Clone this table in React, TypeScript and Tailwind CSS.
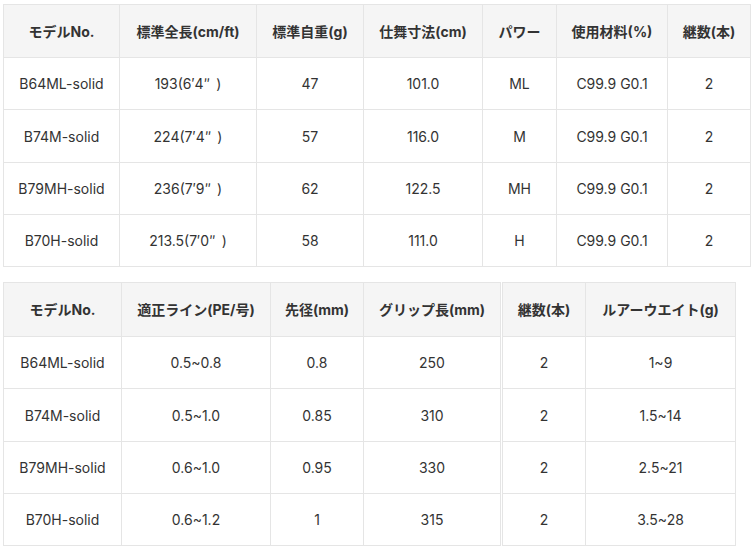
import React from "react";

const Q = () => (
  <span className="mr-[6px] font-['Noto_Sans_CJK_JP',sans-serif]">″</span>
);

const t1Head = ["モデルNo.", "標準全長(cm/ft)", "標準自重(g)", "仕舞寸法(cm)", "パワー", "使用材料(%)", "継数(本)"];
const t1W = ["w-[116px]", "w-[137px]", "w-[107px]", "w-[119px]", "w-[74px]", "w-[111px]", "w-[83px]"];
const t1Rows: React.ReactNode[][] = [
  ["B64ML-solid", <>193(6′4<Q />)</>, "47", "101.0", "ML", "C99.9 G0.1", "2"],
  ["B74M-solid", <>224(7′4<Q />)</>, "57", "116.0", "M", "C99.9 G0.1", "2"],
  ["B79MH-solid", <>236(7′9<Q />)</>, "62", "122.5", "MH", "C99.9 G0.1", "2"],
  ["B70H-solid", <>213.5(7′0<Q />)</>, "58", "111.0", "H", "C99.9 G0.1", "2"],
];

const t2aHead = ["モデルNo.", "適正ライン(PE/号)", "先径(mm)", "グリップ長(mm)"];
const t2aW = ["w-[118px]", "w-[149px]", "w-[93px]", "w-[137px]"];
const t2aRows = [
  ["B64ML-solid", "0.5~0.8", "0.8", "250"],
  ["B74M-solid", "0.5~1.0", "0.85", "310"],
  ["B79MH-solid", "0.6~1.0", "0.95", "330"],
  ["B70H-solid", "0.6~1.2", "1", "315"],
];

const t2bHead = ["継数(本)", "ルアーウエイト(g)"];
const t2bW = ["w-[83px]", "w-[150px]"];
const t2bRows = [
  ["2", "1~9"],
  ["2", "1.5~14"],
  ["2", "2.5~21"],
  ["2", "3.5~28"],
];

const rowHeights = ["h-[52px]", "h-[53px]", "h-[52px]", "h-[52px]"];

function Table({
  head,
  widths,
  rows,
  tableW,
  headH,
}: {
  head: string[];
  widths: string[];
  rows: React.ReactNode[][];
  tableW: string;
  headH: string;
}) {
  return (
    <table className={`table-fixed border-collapse text-[14px] text-[#333333] ${tableW}`}>
      <colgroup>
        {widths.map((w, i) => (
          <col key={i} className={w} />
        ))}
      </colgroup>
      <thead>
        <tr className={headH}>
          {head.map((h, i) => (
            <th
              key={i}
              className="border border-[#e5e5e5] bg-[#f5f5f5] p-0 text-center align-middle font-bold"
            >
              {h}
            </th>
          ))}
        </tr>
      </thead>
      <tbody>
        {rows.map((r, ri) => (
          <tr key={ri} className={rowHeights[ri]}>
            {r.map((c, ci) => (
              <td
                key={ci}
                className="border border-[#e5e5e5] bg-white p-0 text-center align-middle font-normal"
              >
                {c}
              </td>
            ))}
          </tr>
        ))}
      </tbody>
    </table>
  );
}

export default function App() {
  return (
    <div className="h-[553px] w-[752px] overflow-hidden bg-white pl-[3px] pt-[4px] font-['Inter','Noto_Sans_CJK_JP',sans-serif]">
      <Table head={t1Head} widths={t1W} rows={t1Rows} tableW="w-[747px]" headH="h-[53px]" />
      <div className="mt-[15px] flex items-start gap-[1px]">
        <Table head={t2aHead} widths={t2aW} rows={t2aRows} tableW="w-[497px]" headH="h-[54px]" />
        <Table head={t2bHead} widths={t2bW} rows={t2bRows} tableW="w-[233px]" headH="h-[54px]" />
      </div>
    </div>
  );
}
